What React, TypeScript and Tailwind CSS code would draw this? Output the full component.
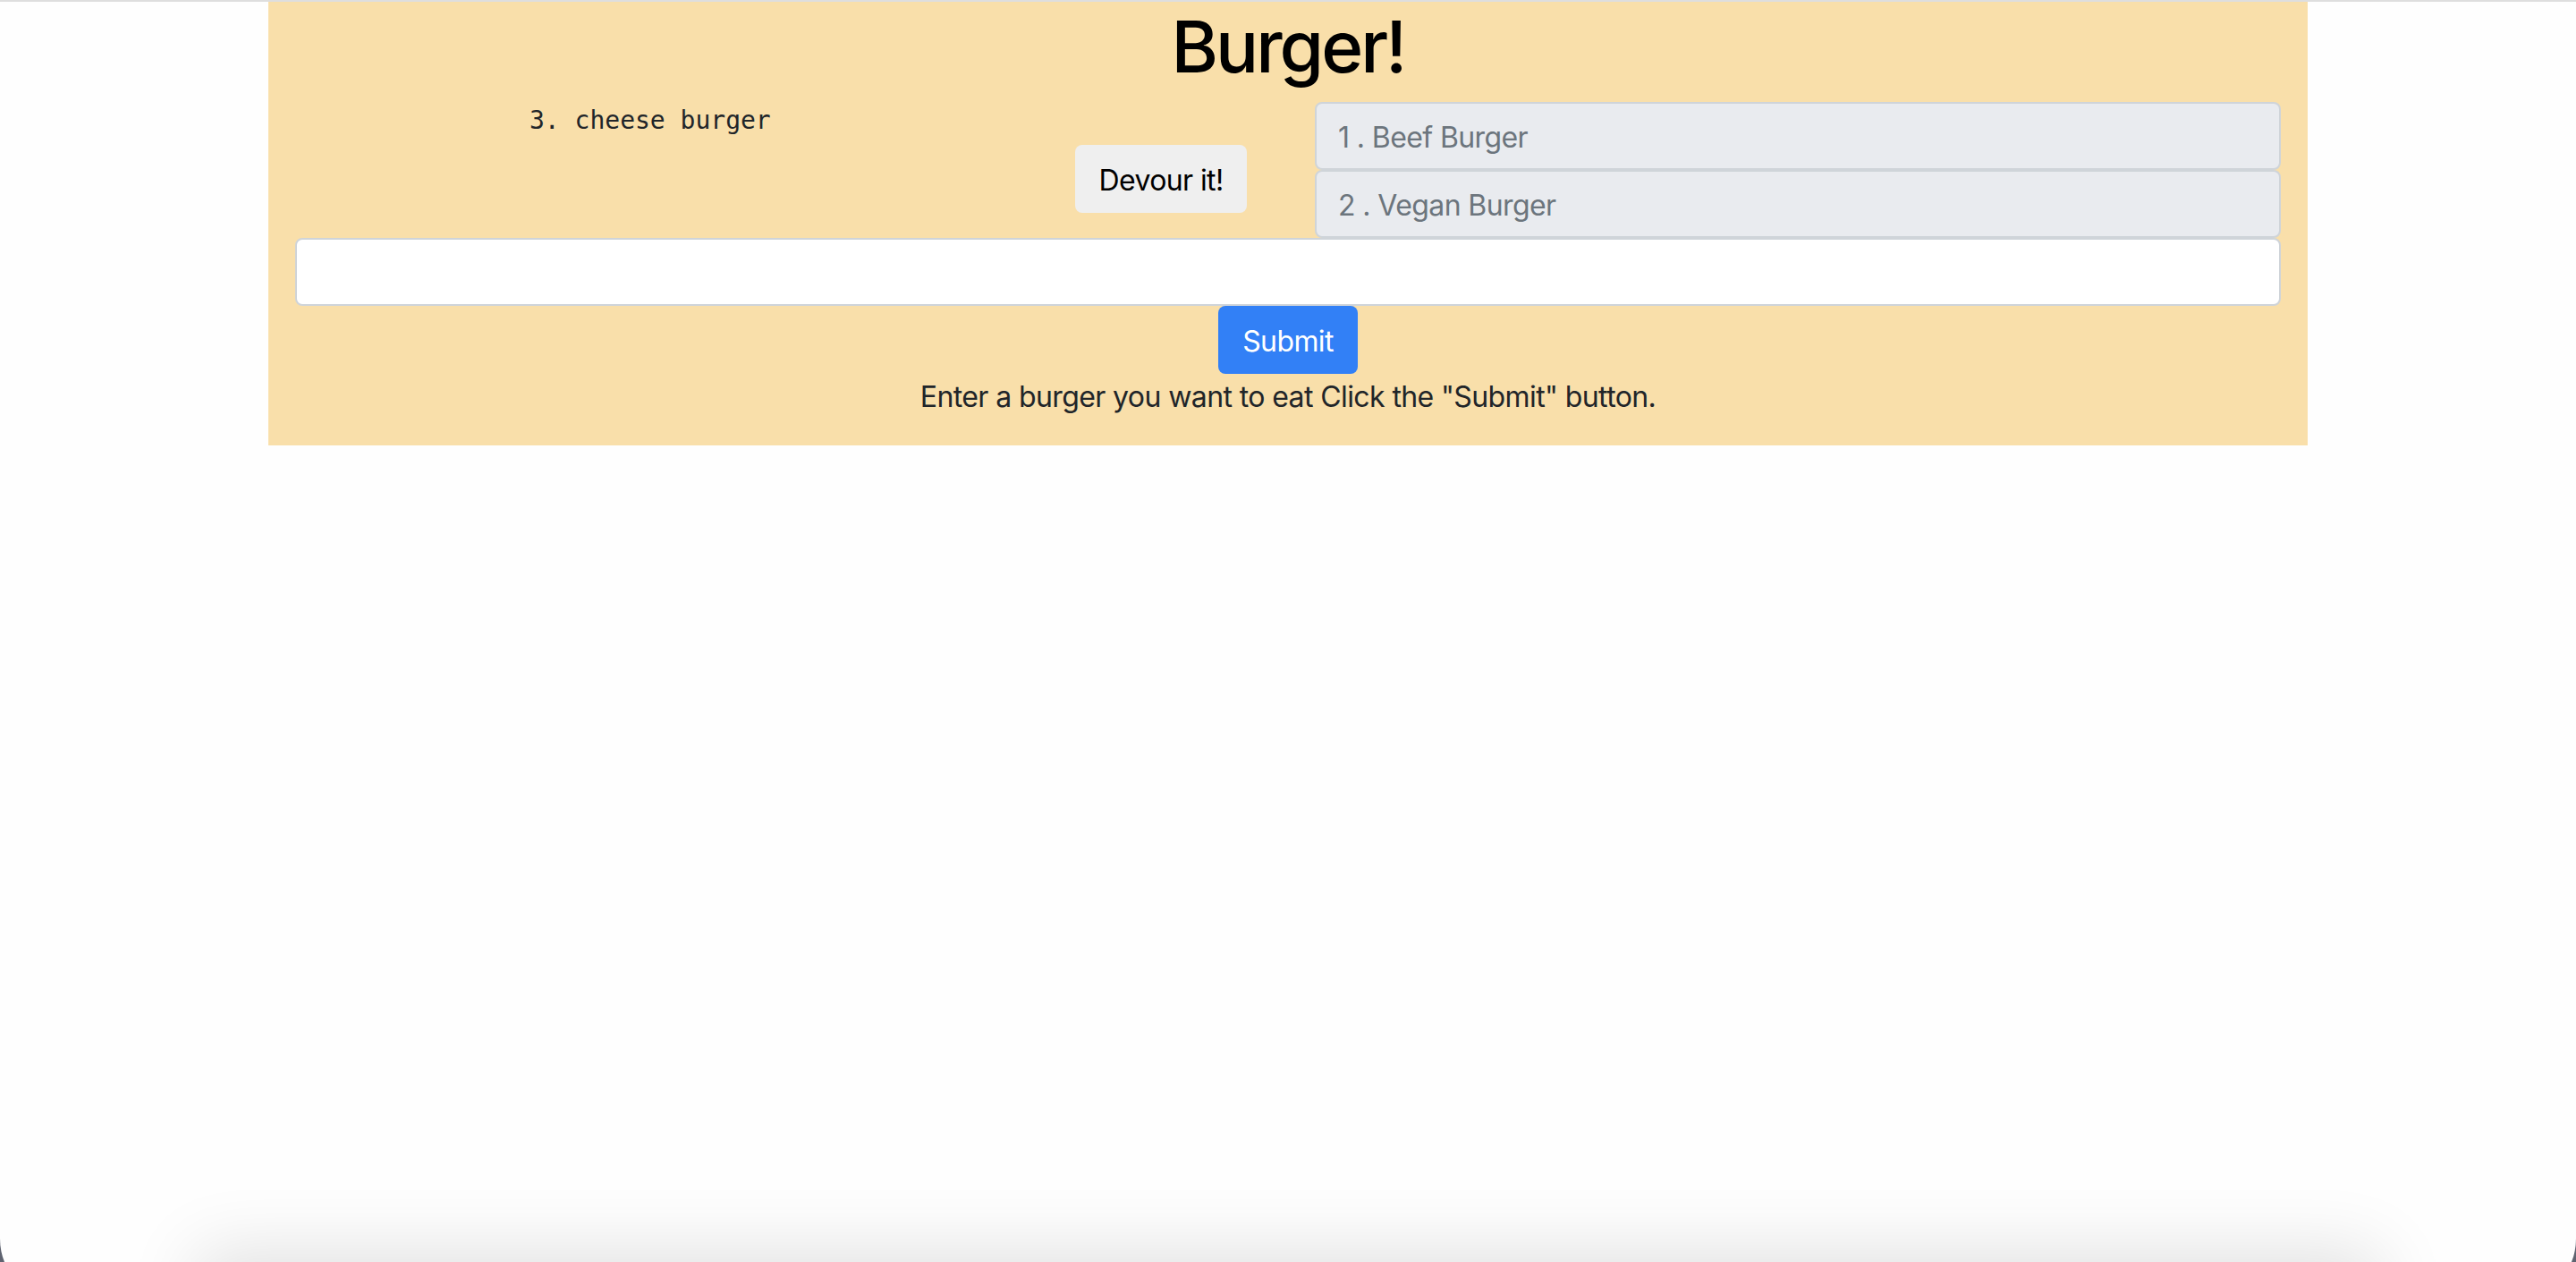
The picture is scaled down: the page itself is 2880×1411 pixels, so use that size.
const burgers = [
  { id: 1, name: "Beef Burger" },
  { id: 2, name: "Vegan Burger" },
];

export default function App() {
  return (
    <div className="relative h-[1411px] overflow-hidden bg-[#5f6370] font-['Inter','Liberation_Sans',sans-serif] tracking-[-0.6px]">
      {/* window */}
      <div className="h-[1455px] rounded-b-[70px] border-t-2 border-[#dedede] bg-[#fefefe]">
        <div className="mx-auto w-[2280px] bg-[#f9dfaa] px-[30px] pb-[30px]">
          <h1 className="mb-[14px] pt-[2px] text-center text-[80px] font-medium leading-[96px] tracking-[-3px] text-black">
            Burger!
          </h1>

          <div className="-mx-[30px] flex">
            {/* devoured / waiting */}
            <div className="flex w-1/2 flex-col px-[30px]">
              <p className="pl-[262px] font-['DejaVu_Sans_Mono',monospace] text-[28px] leading-[42px] tracking-normal text-[#212529]">
                3. cheese burger
              </p>
              <button className="mr-[16px] mt-[6px] flex h-[76px] w-[192px] items-center justify-center self-end rounded-[8px] bg-[#efefef] pt-[4px] text-[32px] leading-[48px] text-black">
                Devour it!
              </button>
            </div>

            {/* list */}
            <div className="flex w-1/2 flex-col px-[30px]">
              {burgers.map((b) => (
                <div
                  key={b.id}
                  className="flex h-[76px] items-center rounded-[8px] border-2 border-[#cfd4d9] bg-[#e9ebef] px-[24px] pt-[4px] text-[32px] text-[#6c757d]"
                >
                  {b.id} . {b.name}
                </div>
              ))}
            </div>
          </div>

          <input
            type="text"
            className="block h-[76px] w-full rounded-[8px] border-2 border-[#cfd4d9] bg-white px-[24px] text-[32px] outline-none"
          />
          <button className="mx-auto flex h-[76px] w-[156px] items-center justify-center rounded-[8px] bg-[#3280f6] pt-[4px] text-[32px] text-white">
            Submit
          </button>
          <p className="pt-[2px] text-center text-[32px] leading-[48px] text-[#212529]">
            Enter a burger you want to eat Click the "Submit" button.
          </p>
        </div>
      </div>

      {/* shadow at the bottom edge */}
      <div className="pointer-events-none absolute left-[260px] right-[260px] top-[1440px] h-[60px] shadow-[0_0_80px_40px_rgba(0,0,0,0.12)]" />
    </div>
  );
}
